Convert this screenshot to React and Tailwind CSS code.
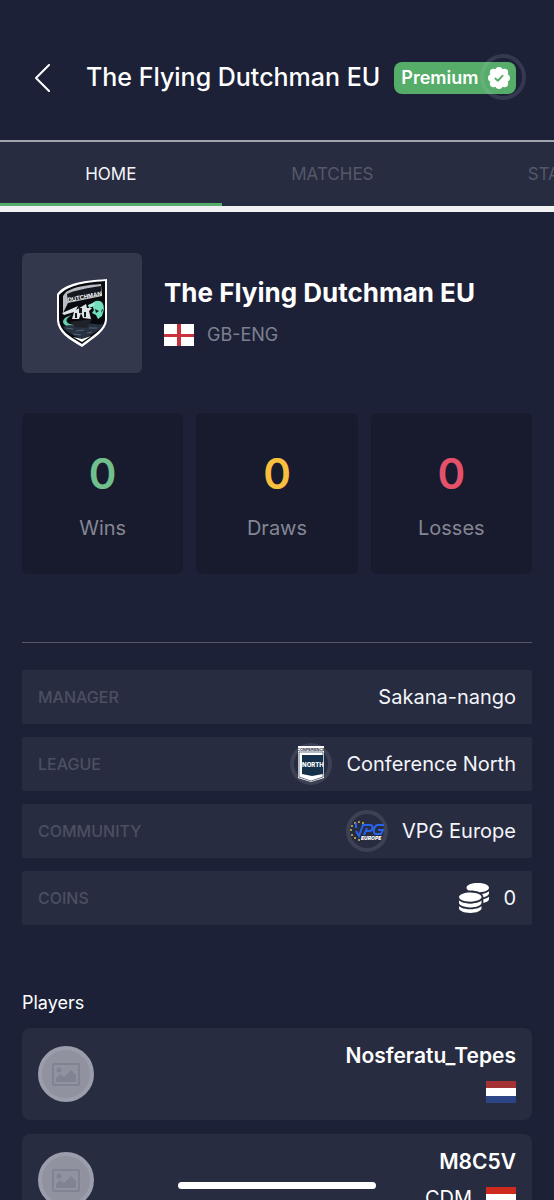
import { useState } from 'react';
import { FaCoins } from 'react-icons/fa6';

const tabs = ['HOME', 'MATCHES', 'STATS'];

const stats = [
  { label: 'Wins', value: 0, color: 'text-[#71bf8b]' },
  { label: 'Draws', value: 0, color: 'text-[#f9bf3f]' },
  { label: 'Losses', value: 0, color: 'text-[#e5516b]' },
];

const players = [
  { name: 'Nosferatu_Tepes', position: '', top: '#a43235' },
  { name: 'M8C5V', position: 'CDM', top: '#cf2a1e' },
];

function ClubCrest() {
  return (
    <svg viewBox="0 0 52 70" className="h-[70px] w-[52px]" aria-label="Club crest">
      <path d="M1 16C9 6 22 3 51 1V42C50 53 39 59 26 69C12 61 2 54 1 43Z" fill="#fff" />
      <path d="M3 17C12 8 24 5 49 3V42C48 51 38 57 26 66C13 58 4 53 3 42Z" fill="#080a10" />
      <path d="M10 14C20 8 32 7 45 6L46 18L12 25L7 35V18Z" fill="#b9bcc2" />
      <path d="M11 16C20 12 32 10 45 8L45 17L12 24Z" fill="#16191f" />
      <text x="12" y="24" fontSize="6" fontWeight="700" fill="#fff" transform="rotate(-11 12 24)" fontFamily="Liberation Sans Narrow, Liberation Sans, sans-serif">DUTCHMAN</text>
      <path d="M6 35L22 28L20 32L30 26L31 30H36L33 33L35 41L27 40L25 35L23 41H16L18 34L8 37Z" fill="#dfe5e6" />
      <path d="M23 30h3v5h-3zM28 34h2v5h-2zM19 35h2v5h-2z" fill="#13171d" />
      <path d="M36 27C37 22 45 21 47 26C49 31 47 34 46 38L42 41L40 37L36 35L38 32Z" fill="#70dfbd" />
      <path d="M39 31l4 2-3 2zM46 31l1 1-2 3z" fill="#0b1a1a" />
      <path d="M16 37C7 39 5 44 9 47C12 50 17 49 21 47C13 47 9 44 11 41C12 39 14 38 16 37Z" fill="#63cfae" />
      <path d="M32 27L39 24L38 28L33 30Z" fill="#a0ecd6" />
      <path d="M7 49C16 45 20 50 28 47C37 43 41 49 48 45C46 52 34 57 26 62C18 57 9 54 7 49Z" fill="#27313f" />
      <path d="M14 44L36 41L31 50L19 49Z" fill="#20222a" />
      <path d="M10 50l7 1M20 53l8-1M33 50l8 0M17 56l8 1M31 55l5-1" stroke="#56657a" strokeWidth="1" />
      <path d="M17 59L26 64L35 58L26 61Z" fill="#fff" />
    </svg>
  );
}

function ConferenceLogo() {
  return (
    <svg viewBox="0 0 26 36" className="h-9 w-[26px]" aria-label="Conference North logo">
      <path d="M0 0H26V32L13 36L0 32Z" fill="#fff" />
      <text x="13" y="5" fontSize="4" fontWeight="800" textAnchor="middle" fill="#101d31" fontFamily="Liberation Sans, sans-serif">CONFERENCE</text>
      <path d="M1 6H25V31L13 35L1 31Z" fill="none" stroke="#6a7788" strokeWidth="1" />
      <path d="M4 9H25V28L14 30L4 28Z" fill="#14304a" />
      <text x="15" y="21" fontSize="6" fontWeight="800" textAnchor="middle" fill="#fff" fontFamily="Inter, sans-serif">NORTH</text>
    </svg>
  );
}

function VpgLogo() {
  return (
    <svg viewBox="0 0 36 22" className="h-[22px] w-9 shrink-0" aria-label="VPG Europe logo">
      <g fill="#d8b848">
        <circle cx="10" cy="2" r="1" />
        <circle cx="14" cy="3" r="1" />
        <circle cx="6" cy="3" r="1" />
        <circle cx="3" cy="6" r="1" />
        <circle cx="2" cy="10" r="1" />
        <circle cx="3" cy="15" r="1" />
        <circle cx="6" cy="18" r="1" />
        <circle cx="10" cy="20" r="1" />
      </g>
      <path d="M7 11L10 16L14 5H21C25 5 24 11 20 11H17M18 8L15 15M35 5H29C25 5 23 14 27 14H32L34 10H29" fill="none" stroke="#2863e8" strokeWidth="2" />
      <path d="M7 3V8" stroke="#2863e8" strokeWidth="2" />
      <text x="12" y="20" fontSize="5" fontWeight="900" fontStyle="italic" fill="#fff" fontFamily="Inter, sans-serif">EUROPE</text>
    </svg>
  );
}

function VerifiedIcon() {
  return (
    <svg viewBox="0 0 24 24" className="size-[22px]" aria-hidden="true">
      <g fill="#fff">
        <circle cx="12" cy="12" r="9" />
        <circle cx="12" cy="4" r="4" />
        <circle cx="18" cy="6" r="4" />
        <circle cx="20" cy="12" r="4" />
        <circle cx="18" cy="18" r="4" />
        <circle cx="12" cy="20" r="4" />
        <circle cx="6" cy="18" r="4" />
        <circle cx="4" cy="12" r="4" />
        <circle cx="6" cy="6" r="4" />
      </g>
      <path d="M8 12.5L10.8 15L16 9.5" fill="none" stroke="#55ad69" strokeWidth="2" strokeLinecap="round" strokeLinejoin="round" />
    </svg>
  );
}

function Avatar() {
  return (
    <div className="flex size-14 items-center justify-center rounded-full border-4 border-[#9b9eaa] bg-[#9092a0]">
      <svg viewBox="0 0 28 23" className="h-[23px] w-7" aria-hidden="true">
        <rect x="1" y="1" width="26" height="21" rx="1" fill="none" stroke="#808391" strokeWidth="2" />
        <circle cx="7" cy="7" r="2.5" fill="#808391" />
        <path d="M4 19V15L8 11L12 14L19 7L24 12V19Z" fill="#808391" />
      </svg>
    </div>
  );
}

function InfoRow({ label, children }) {
  return (
    <div className="flex h-[54px] items-center justify-between rounded-xs bg-[#282c40] px-4">
      <dt className="text-base font-medium text-[#4b4f62]">{label}</dt>
      <dd className="flex items-center gap-[14px] text-xl text-[#f4f5fa]">{children}</dd>
    </div>
  );
}

export default function App() {
  const [active, setActive] = useState('HOME');

  return (
    <div className="flex h-screen flex-col overflow-hidden bg-[#1c2137] font-['Inter',sans-serif] text-white">
      {/* Header */}
      <header className="flex shrink-0 items-center border-b-2 border-[#a2a4ae] pt-[55px] pr-7 pb-[39px] pl-[34px]">
        <button type="button" aria-label="Back" className="mr-[35px] shrink-0">
          <svg viewBox="0 0 17 28" className="h-7 w-[17px]" fill="none" stroke="currentColor" strokeWidth="2" strokeLinecap="round" strokeLinejoin="round">
            <path d="M15 1L2 14L15 27" />
          </svg>
        </button>
        <h1 className="text-[25px] font-medium whitespace-nowrap">The Flying Dutchman EU</h1>
        <div className="relative my-[7px] ml-[14px] flex h-8 w-[122px] shrink-0 items-center justify-between rounded-lg bg-[#55ad69] pr-[6px] pl-[7px]">
          <span className="text-lg font-semibold">Premium</span>
          <VerifiedIcon />
          <span className="absolute -top-2 -right-[10px] size-[46px] rounded-full border-4 border-[#c0c4e0]/15" />
        </div>
      </header>

      {/* Tabs */}
      <nav className="flex shrink-0 overflow-hidden border-b-6 border-[#f1f1f3] bg-[#282c40]">
        {tabs.map((tab) => (
          <button
            key={tab}
            type="button"
            onClick={() => setActive(tab)}
            className={`h-16 w-2/5 shrink-0 border-b-3 pt-1 text-[17px] ${
              active === tab ? 'border-[#55ad69] text-[#f4f5fa]' : 'border-transparent text-[#55586a]'
            }`}
          >
            {tab}
          </button>
        ))}
      </nav>

      <main className="min-h-0 flex-1 overflow-y-auto px-[22px] pt-[41px] [scrollbar-width:none]">
        {/* Club */}
        <section className="flex gap-[22px]">
          <div className="flex size-[120px] shrink-0 items-center justify-center rounded-md bg-[#33384c]">
            <ClubCrest />
          </div>
          <div className="pt-5">
            <h2 className="text-[26px] leading-10 font-bold whitespace-nowrap">The Flying Dutchman EU</h2>
            <div className="mt-2 flex items-center gap-[13px]">
              <svg viewBox="0 0 30 22" className="h-[22px] w-[30px]" aria-label="England">
                <path d="M0 0H30V22H0Z" fill="#fff" />
                <path d="M13 0H17V22H13ZM0 10H30V13H0Z" fill="#c8323c" />
              </svg>
              <span className="text-lg leading-7 text-[#7d808f]">GB-ENG</span>
            </div>
          </div>
        </section>

        {/* Results */}
        <section className="mt-10 grid grid-cols-3 gap-[13px]">
          {stats.map((stat) => (
            <div key={stat.label} className="flex aspect-square flex-col items-center justify-center rounded-md bg-[#181b2d]">
              <span className={`text-[42px] leading-[60px] font-semibold ${stat.color}`}>{stat.value}</span>
              <span className="mt-2 text-xl leading-8 text-[#848693]">{stat.label}</span>
            </div>
          ))}
        </section>

        <hr className="mt-[68px] border-[#555969]" />

        {/* Details */}
        <dl className="mt-[27px] flex flex-col gap-[13px]">
          <InfoRow label="MANAGER">Sakana-nango</InfoRow>
          <InfoRow label="LEAGUE">
            <span className="flex size-[42px] items-center justify-center rounded-full border-4 border-[#3d4154]">
              <ConferenceLogo />
            </span>
            Conference North
          </InfoRow>
          <InfoRow label="COMMUNITY">
            <span className="flex size-[42px] items-center justify-center rounded-full border-4 border-[#3d4154]">
              <VpgLogo />
            </span>
            VPG Europe
          </InfoRow>
          <InfoRow label="COINS">
            <FaCoins size={30} color="#fff" />
            0
          </InfoRow>
        </dl>

        {/* Players */}
        <section className="mt-16">
          <h3 className="text-lg leading-7">Players</h3>
          <ul className="mt-[11px] flex flex-col gap-[14px] pb-10">
            {players.map((player) => (
              <li key={player.name} className="flex h-[92px] items-center justify-between rounded-lg bg-[#282c40] px-4">
                <Avatar />
                <div className="flex flex-col items-end">
                  <span className="text-[21px] leading-8 font-semibold">{player.name}</span>
                  <div className="mt-1 flex h-8 items-center gap-[14px]">
                    <span className="text-xl">{player.position}</span>
                    <svg viewBox="0 0 30 22" className="h-[22px] w-[30px]" aria-label="Netherlands">
                      <path d="M0 0H30V22H0Z" fill="#fff" />
                      <path d="M0 0H30V7H0Z" fill={player.top} />
                      <path d="M0 15H30V22H0Z" fill="#2b4587" />
                    </svg>
                  </div>
                </div>
              </li>
            ))}
          </ul>
        </section>
      </main>

      {/* Home indicator */}
      <div className="fixed bottom-[11px] left-1/2 h-[7px] w-[198px] -translate-x-1/2 rounded-full bg-white" />
    </div>
  );
}
